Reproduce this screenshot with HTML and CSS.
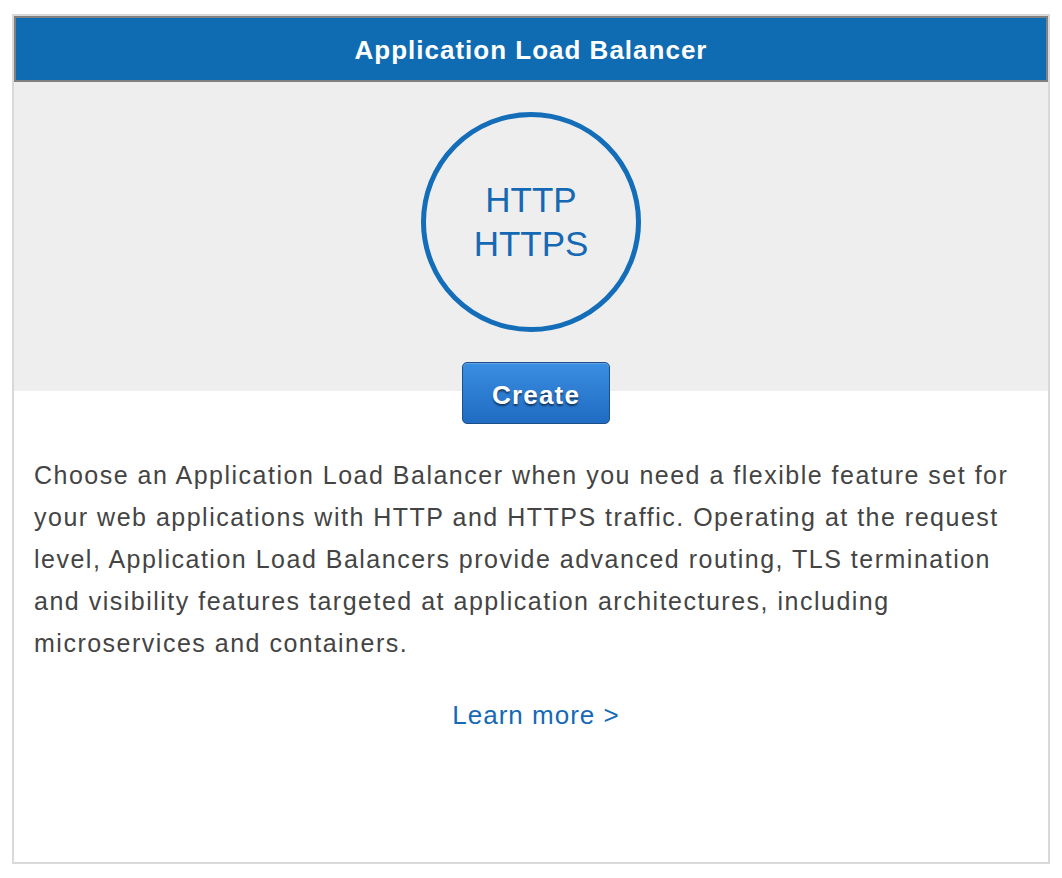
FILE: index.html
```html
<!DOCTYPE html>
<html>
<head>
<meta charset="utf-8">
<link rel="stylesheet" href="styles.css">
</head>
<body>
<div class="card">
  <div class="card-header">Application Load Balancer</div>
  <div class="hero">
    <div class="circle">
      <span>HTTP</span>
      <span>HTTPS</span>
    </div>
    <button class="create-btn">Create</button>
  </div>
  <p class="desc">Choose an Application Load Balancer when you need a flexible feature set for your web applications with HTTP and HTTPS traffic. Operating at the request level, Application Load Balancers provide advanced routing, TLS termination and visibility features targeted at application architectures, including microservices and containers.</p>
  <div class="learn"><a href="#">Learn more &gt;</a></div>
</div>
</body>
</html>
```
FILE: styles.css
```css
html, body {
  margin: 0;
  padding: 0;
  background: #fff;
}
body {
  padding: 14px 12px;
  font-family: "Liberation Sans", Arial, Helvetica, sans-serif;
}
.card {
  box-sizing: border-box;
  height: 850px;
  border: 2px solid #d9d9d9;
  background: #fff;
}
.card-header {
  box-sizing: border-box;
  height: 66px;
  border: 2px solid #808080;
  background: #0f6cb3;
  color: #fff;
  font-weight: bold;
  font-size: 26px;
  letter-spacing: 1px;
  display: flex;
  align-items: center;
  justify-content: center;
  padding-top: 2px;
}
.hero {
  display: flex;
  flex-direction: column;
  align-items: center;
  padding-top: 30px;
  background: linear-gradient(#eeeeee 0, #eeeeee 309px, #fff 309px);
}
.circle {
  box-sizing: border-box;
  width: 220px;
  height: 220px;
  border: 5px solid #136db8;
  border-radius: 50%;
  display: flex;
  flex-direction: column;
  align-items: center;
  justify-content: center;
  color: #1568b3;
  font-size: 35px;
  line-height: 44px;
}
.create-btn {
  margin: 30px 0 0 10px;
  width: 148px;
  height: 62px;
  border: 1px solid #1d4f86;
  border-radius: 5px;
  background: linear-gradient(#3a8ee2, #1f6cc2);
  color: #fff;
  font-family: "Liberation Sans", Arial, sans-serif;
  font-weight: bold;
  font-size: 26px;
  letter-spacing: 1.2px;
  text-shadow: 0 2px 2px rgba(0,0,0,0.55);
  box-shadow: inset 0 1px 0 rgba(255,255,255,0.2);
  padding: 4px 0 0 0;
  cursor: pointer;
}
.desc {
  margin: 30px 0 0 0;
  padding: 0 20px;
  color: #444;
  font-size: 25px;
  letter-spacing: 1.5px;
  line-height: 42px;
}
.learn {
  margin-top: 30px;
  padding-left: 10px;
  text-align: center;
  font-size: 26px;
  letter-spacing: 1px;
  line-height: 42px;
}
.learn a {
  color: #1569b5;
  text-decoration: none;
}
```
